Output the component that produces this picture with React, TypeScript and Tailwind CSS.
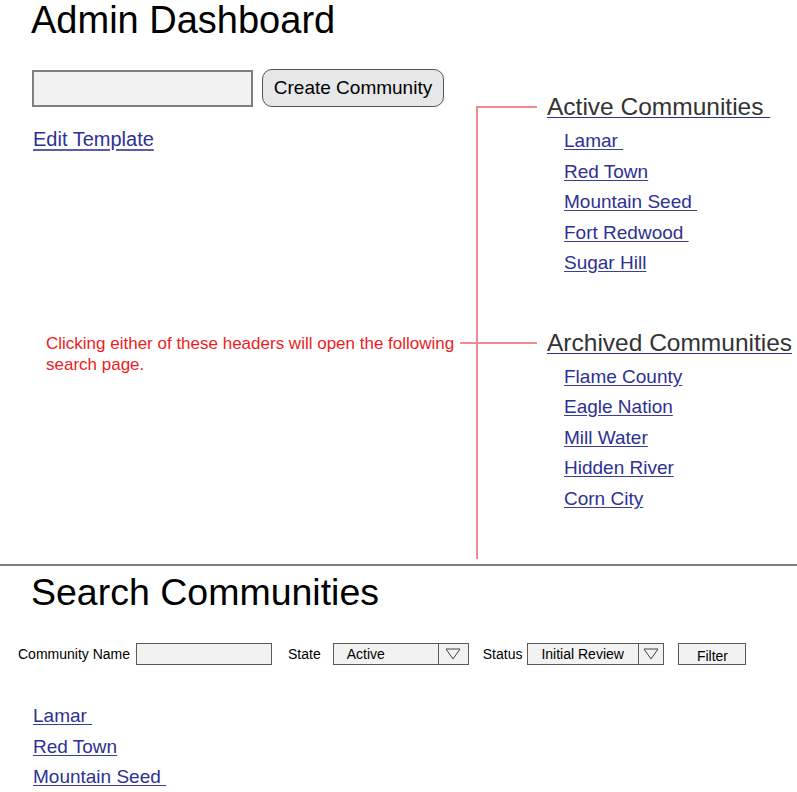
import React from "react";

const linkCls =
  "self-start whitespace-pre text-[19px] leading-[30px] h-[30.5px] text-[#2e3192] underline decoration-[#3b3e9a] underline-offset-[2px]";

function Group({ title, links, className }: { title: string; links: string[]; className?: string }) {
  return (
    <div className={"flex flex-col " + (className ?? "")}>
      <div className="flex items-center h-[30px]">
        <div className="w-[59px] h-[2px] bg-[#f28b8f]" />
        <span className="ml-[10px] whitespace-pre text-[24.5px] leading-[30px] text-[#333333] underline decoration-[#2e3192] decoration-1 underline-offset-[2px]">
          {title}
        </span>
      </div>
      <div className="mt-[4px] flex flex-col pl-[86px]">
        {links.map((l) => (
          <a key={l} href="#" className={linkCls}>
            {l}
          </a>
        ))}
      </div>
    </div>
  );
}

function Select({ value, width, arrowWidth, textPad }: { value: string; width: string; arrowWidth: string; textPad: string }) {
  return (
    <div className={"flex h-[22px] bg-[#f2f2f2] border border-[#5a5a5a] " + width}>
      <div className={"flex-1 flex items-center " + textPad}>{value}</div>
      <div className={"flex items-center justify-center border-l border-[#5a5a5a] " + arrowWidth}>
        <svg width="16" height="12" viewBox="0 0 16 12">
          <polygon points="1,1 15,1 8,11" fill="none" stroke="#444" strokeWidth="1" />
        </svg>
      </div>
    </div>
  );
}

export default function App() {
  return (
    <div className="w-[797px] h-[792px] overflow-hidden bg-white font-['Liberation_Sans',Arial,sans-serif] text-black">
      <div className="flex h-[564px]">
        <div className="w-[476px] flex flex-col">
          <h1 className="ml-[31px] text-[38px] leading-[40px] text-black">Admin Dashboard</h1>
          <div className="mt-[29px] ml-[32px] flex items-center gap-[9px] h-[38px]">
            <div className="w-[221px] h-[37px] bg-[#f2f2f2] border-2 border-[#7f7f7f]" />
            <button className="w-[182px] h-[38px] rounded-[10px] border border-[#555] bg-[#e6e7e8] text-[19px] text-black">
              Create Community
            </button>
          </div>
          <a
            href="#"
            className="mt-[21px] ml-[33px] self-start text-[20px] leading-[22px] text-[#2e3192] underline decoration-[#5a5da8] underline-offset-[3px]"
          >
            Edit Template
          </a>
          <div className="mt-[183px] flex items-start">
            <p className="ml-[46px] whitespace-nowrap text-[17px] leading-[21px] text-[#ed1c24]">
              Clicking either of these headers will open the following
              <br />
              search page.
            </p>
            <div className="mt-[9px] ml-[6px] flex-1 h-[2px] bg-[#f28b8f]" />
          </div>
        </div>
        <div className="flex flex-1">
          <div className="mt-[106px] w-[2px] h-[453px] bg-[#f28b8f]" />
          <div className="flex flex-col flex-1 pt-[92px]">
            <Group
              title="Active Communities "
              links={["Lamar ", "Red Town", "Mountain Seed ", "Fort Redwood ", "Sugar Hill"]}
            />
            <Group
              className="mt-[49px]"
              title="Archived Communities"
              links={["Flame County", "Eagle Nation", "Mill Water", "Hidden River", "Corn City"]}
            />
          </div>
        </div>
      </div>
      <div className="h-[2px] bg-[#7f7f7f]" />
      <h2 className="mt-[6px] ml-[31px] text-[37.5px] leading-[40px] text-black">Search Communities</h2>
      <div className="mt-[31px] flex items-center h-[22px] text-[14px] text-black">
        <span className="ml-[18px]">Community Name</span>
        <div className="ml-[6px] w-[136px] h-[22px] bg-[#f2f2f2] border border-[#5a5a5a]" />
        <span className="ml-[16px]">State</span>
        <div className="ml-[12px]">
          <Select value="Active" width="w-[136px]" arrowWidth="w-[30px]" textPad="pl-[13px]" />
        </div>
        <span className="ml-[14px]">Status</span>
        <div className="ml-[5px]">
          <Select value="Initial Review" width="w-[137px]" arrowWidth="w-[25px]" textPad="pl-[13px]" />
        </div>
        <button className="ml-[14px] w-[68px] h-[22px] bg-[#f2f2f2] border border-[#5a5a5a] text-[14px] leading-[20px] pt-[2px]">
          Filter
        </button>
      </div>
      <div className="mt-[36px] pl-[33px] flex flex-col">
        {["Lamar ", "Red Town", "Mountain Seed "].map((l) => (
          <a key={l} href="#" className={linkCls}>
            {l}
          </a>
        ))}
      </div>
    </div>
  );
}
